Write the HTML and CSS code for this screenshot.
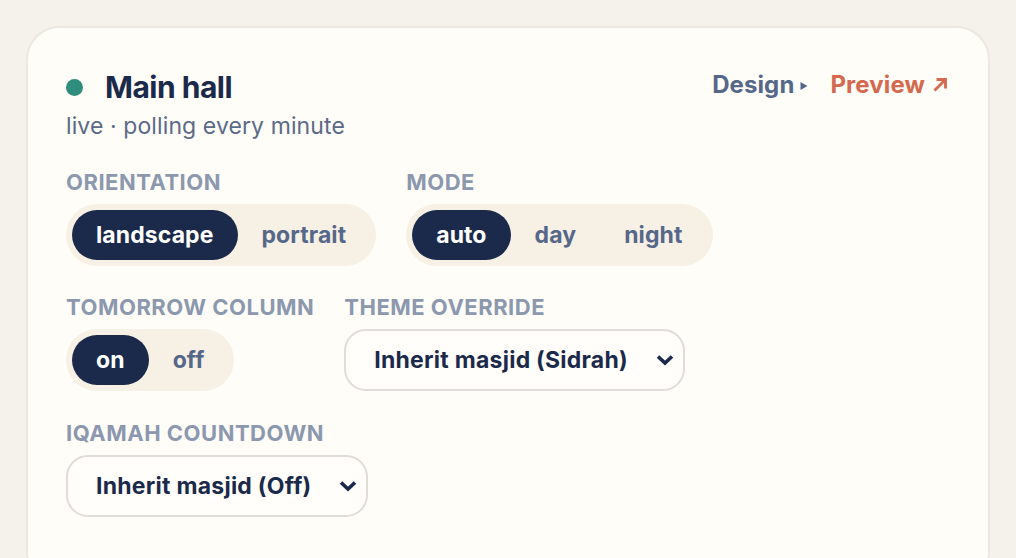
FILE: index.html
```html
<!DOCTYPE html>
<html lang="en">
<head>
<meta charset="utf-8">
<title>Main hall</title>
<link rel="stylesheet" href="styles.css">
</head>
<body>
<main class="card">
  <header class="head">
    <div class="title-block">
      <div class="title-row">
        <span class="dot"></span>
        <h1 class="title">Main hall</h1>
      </div>
      <p class="sub">live · polling every minute</p>
    </div>
    <nav class="links">
      <a class="link design" href="#">Design <svg class="tri" viewBox="0 0 8 10" width="8" height="10"><path d="M0.5 1 L7.5 5 L0.5 9 Z" fill="currentColor"/></svg></a>
      <a class="link preview" href="#">Preview <svg class="arrow" viewBox="0 0 16 16" width="16" height="16"><path d="M2.5 13.5 L12.5 3.5 M4.5 2.5 H13.5 V11.5" fill="none" stroke="currentColor" stroke-width="2.8"/></svg></a>
    </nav>
  </header>

  <div class="row">
    <div class="field">
      <div class="label">Orientation</div>
      <div class="seg">
        <button class="opt on">landscape</button>
        <button class="opt">portrait</button>
      </div>
    </div>
    <div class="field">
      <div class="label">Mode</div>
      <div class="seg">
        <button class="opt on">auto</button>
        <button class="opt">day</button>
        <button class="opt">night</button>
      </div>
    </div>
  </div>

  <div class="row">
    <div class="field">
      <div class="label">Tomorrow column</div>
      <div class="seg">
        <button class="opt on">on</button>
        <button class="opt">off</button>
      </div>
    </div>
    <div class="field">
      <div class="label">Theme override</div>
      <div class="select">
        <span>Inherit masjid (Sidrah)</span>
        <svg class="chev" viewBox="0 0 18 12" width="18" height="12"><path d="M2 2.5 L9 9 L16 2.5" fill="none" stroke="currentColor" stroke-width="3.6"/></svg>
      </div>
    </div>
  </div>

  <div class="row">
    <div class="field">
      <div class="label">Iqamah countdown</div>
      <div class="select">
        <span>Inherit masjid (Off)</span>
        <svg class="chev" viewBox="0 0 18 12" width="18" height="12"><path d="M2 2.5 L9 9 L16 2.5" fill="none" stroke="currentColor" stroke-width="3.6"/></svg>
      </div>
    </div>
  </div>
</main>
</body>
</html>
```

FILE: styles.css
```css
* { box-sizing: border-box; }
html, body { margin: 0; height: 100%; }
body {
  background: #f5f1eb;
  padding: 26px 26px 0;
  font-family: Inter, "Noto Sans", sans-serif;
  color: #1b2a4a;
  overflow: hidden;
}
.card {
  background: #fefdf8;
  border: 2px solid #ece8e1;
  border-radius: 34px;
  padding: 39px 40px 40px 38px;
  height: 560px;
}
.head {
  display: flex;
  justify-content: space-between;
  align-items: flex-start;
}
.title-row {
  display: flex;
  align-items: center;
  gap: 22px;
  height: 40px;
}
.dot {
  width: 17px;
  height: 17px;
  border-radius: 50%;
  background: #2f8d7b;
  flex: none;
}
.title {
  margin: 0;
  font-size: 30px;
  line-height: 40px;
  font-weight: 700;
  letter-spacing: -0.5px;
  color: #1b2a4a;
}
.sub {
  margin: 4px 0 0;
  font-size: 23px;
  line-height: 30px;
  letter-spacing: 0.1px;
  color: #5b6a86;
}
.links {
  display: flex;
  gap: 22px;
  padding-top: 3px;
  align-items: center;
}
.link {
  text-decoration: none;
  font-weight: 700;
  font-size: 24px;
  line-height: 30px;
  letter-spacing: 0.1px;
  display: flex;
  align-items: center;
}
.design { color: #56688a; gap: 6px; }
.design .tri { margin-top: 2px; }
.preview { color: #d4694f; gap: 7px; }
.row {
  display: flex;
  gap: 30px;
  margin-top: 29px;
}
.row + .row { margin-top: 29px; }
.row + .row + .row { margin-top: 30px; }
.field { display: flex; flex-direction: column; gap: 10px; }
.label {
  font-size: 22px;
  font-weight: 700;
  text-transform: uppercase;
  letter-spacing: 0.5px;
  color: #8c98ae;
  line-height: 24px;
}
.seg {
  display: flex;
  align-self: flex-start;
  background: #f7f0e5;
  border-radius: 31px;
  padding: 6px;
}
.opt {
  font: inherit;
  font-size: 23px;
  font-weight: 700;
  letter-spacing: 0.1px;
  height: 50px;
  padding: 0 24px;
  border: 0;
  border-radius: 25px;
  background: transparent;
  color: #56688a;
}
.opt.on { background: #1b2a4a; color: #fff; }
.select {
  display: flex;
  align-items: center;
  align-self: flex-start;
  gap: 28px;
  height: 62px;
  padding: 0 9px 0 28px;
  border: 2px solid #e0ddd8;
  border-radius: 22px;
  background: #fffefb;
  font-size: 23px;
  font-weight: 700;
  letter-spacing: 0.25px;
  color: #1b2a4a;
}
.chev { color: #1b2a4a; flex: none; }
```
